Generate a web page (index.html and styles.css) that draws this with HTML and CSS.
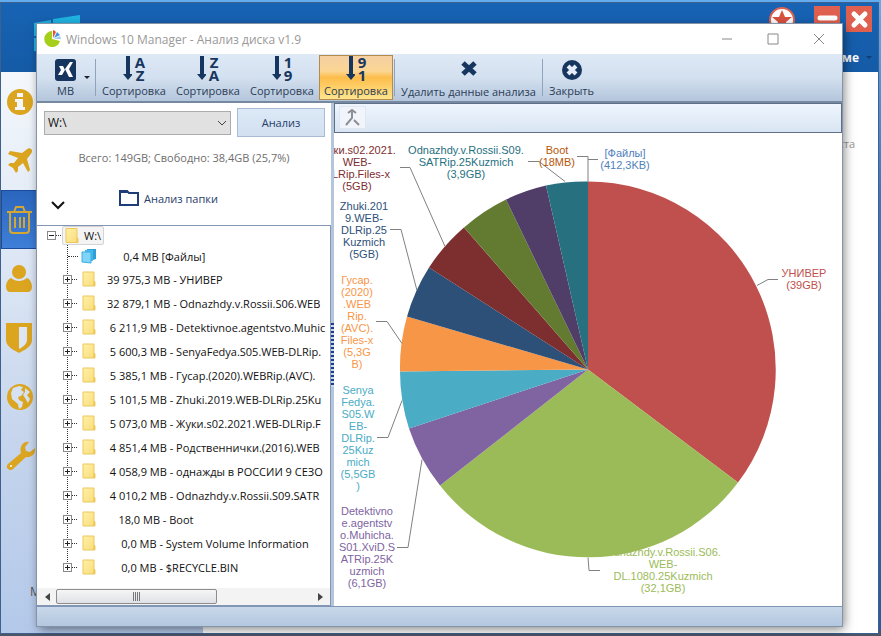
FILE: index.html
```
<!DOCTYPE html>
<html lang="ru">
<head>
    <meta charset="utf-8">
    <title>Windows 10 Manager - Анализ диска v1.9</title>
    <link rel="stylesheet" href="styles.css">
</head>
<body>
    <!-- icons used more than once -->
    <svg width="0" height="0" class="defs">
        <defs>
            <linearGradient id="paper" x1="0" x2="1" y1="0" y2="1">
                <stop offset="0" stop-color="#fff0a8"/>
                <stop offset="1" stop-color="#f8dc78"/>
            </linearGradient>
            <symbol id="folder" viewBox="0 0 14 16">
                <path d="M1 1h11v9l1 1v4H1z" fill="url(#paper)" stroke="#ecc95c"/>
                <path d="M12 10v5" fill="none" stroke="#e6bf4c"/>
            </symbol>
            <symbol id="sort-arrow" viewBox="0 0 9 24">
                <path d="M3 0h4v18h3l-5 6-5-6h3z" fill="#17365f"/>
            </symbol>
        </defs>
    </svg>

    <div class="main-window">
        <header class="main-header">
            <svg class="win-logo" width="46" height="44" viewBox="0 0 46 44"><path d="M0 8l17-3v16H0zM19 4l27-4v21H19zM0 23h17v16l-17-3zM19 23h27v21l-27-4z" fill="#1fb4e2"/></svg>
            <div class="main-buttons">
                <button class="star" aria-label="Избранное"><svg width="28" height="28" viewBox="0 0 28 28"><circle cx="14" cy="14" r="12" fill="#fff" stroke="#e0604f" stroke-width="2"/><path d="M14 4l3 7h7l-6 5 3 8-7-5-7 5 3-8-6-5h7z" fill="#d9513f"/></svg></button>
                <button class="red" aria-label="Свернуть"><svg width="26" height="26" viewBox="0 0 26 26"><path d="M6 12h15" stroke="#fff" stroke-width="5" stroke-linecap="round"/></svg></button>
                <button class="red" aria-label="Выход"><svg width="26" height="26" viewBox="0 0 26 26"><path d="M8 8l11 11M19 8L8 19" stroke="#fff" stroke-width="5" stroke-linecap="round"/></svg></button>
            </div>
            <a href="#" class="about">О программе <span></span></a>
        </header>
        <div class="main-body">
            <nav class="side">
                <a href="#" aria-label="Информация"><svg width="28" height="28" viewBox="0 0 28 28"><circle cx="14" cy="14" r="13" fill="#dba520"/><path d="M11 5h6v4h-6zM9 11h8v8h2v3H9v-3h2v-5H9z" fill="#f2f6fb"/></svg></a>
                <a href="#" aria-label="Оптимизация"><svg width="28" height="28" viewBox="0 0 28 28"><path d="M25 2c2 1 1 4-1 6l-3 4 3 11-2 2-5-9-5 4v4l-2 2-3-5-5-3 2-2h4l4-5-10-4 2-3 12 2 4-3c2-2 4-2 5-1z" fill="#dba520"/></svg></a>
                <a href="#" class="current" aria-label="Очистка"><svg width="28" height="30" viewBox="0 0 28 30" fill="none" stroke="#d6a632" stroke-width="2"><path d="M1 7h25M4 7v18c0 2 1 3 3 3h13c2 0 3-1 3-3V7M8 7l2-5h7l2 5"/><path d="M9 12v11M14 12v11M18 12v11"/></svg></a>
                <a href="#" aria-label="Пользователь"><svg width="28" height="30" viewBox="0 0 28 30" fill="#dba520"><circle cx="13" cy="8" r="7"/><path d="M5 14c5 4 11 4 16 0 3 1 5 5 5 9 0 3-2 5-4 5H4c-2 0-4-2-4-5 0-4 2-8 5-9z"/></svg></a>
                <a href="#" aria-label="Безопасность"><svg width="28" height="30" viewBox="0 0 28 30"><path d="M0 0h26v17c0 6-7 10-13 13C7 27 0 23 0 17z" fill="#dba520"/><path d="M13 4h8v13c0 4-4 7-8 9z" fill="#dce6f4"/></svg></a>
                <a href="#" aria-label="Сеть"><svg width="28" height="28" viewBox="0 0 28 28"><circle cx="14" cy="14" r="13" fill="#dba520"/><path d="M7 5l6-2 4 1-2 3 3 2-3 4-3 1 1 3 4 2-1 5-3 2-1-5-6-5-1-6zM19 5l5 4-3 3 3 4-2 4-3-5-2-3 2-3z" fill="#d6e2f2"/></svg></a>
                <a href="#" aria-label="Разное"><svg width="30" height="30" viewBox="0 0 30 30"><path d="M23 1l-4 5 1 4 4 1 5-4c1 5-3 10-9 9L8 27c-2 3-5 2-6 1-2-2-1-4 0-5l13-11C13 5 18 0 23 1z" fill="#dba520"/><circle cx="5" cy="25" r="1" fill="#fff"/></svg></a>
                <span class="side-note">М</span>
            </nav>
            <main class="page"><p>места</p></main>
        </div>
    </div>

    <section class="window">
        <div class="titlebar">
            <svg width="18" height="18" viewBox="0 0 18 18"><path d="M8 1v8l8 2A8 8 0 1 1 8 1z" fill="#a6cf1c"/><path d="M9 8l3-6A8 8 0 0 0 9 0z" fill="#ee4d35"/><path d="M10 8l6-3-3-3z" fill="#3b96dc"/><path d="M10 9h7l-1-3z" fill="#9ccdf0"/></svg>
            <h1>Windows 10 Manager - Анализ диска v1.9</h1>
            <button aria-label="Свернуть"><svg width="12" height="12"><path d="M1 6h10" stroke="#888"/></svg></button>
            <button aria-label="Развернуть"><svg width="12" height="12"><path d="M1 1h10v10H1z" fill="none" stroke="#888"/></svg></button>
            <button aria-label="Закрыть окно"><svg width="12" height="12"><path d="M1 1l10 10M11 1L1 11" stroke="#888"/></svg></button>
        </div>

        <div class="toolbar">
            <button class="tool unit">
                <svg width="21" height="22" viewBox="0 0 21 22"><rect width="21" height="22" rx="3" fill="#17365f"/><path d="M4 7h4l2 4-3 5H3l3-5zM15 3h3l-4 7 4 8h-4l-4-8z" fill="#fff"/></svg>
                <span>MB</span>
            </button>
            <span class="drop"></span>
            <i class="sep"></i>
            <button class="tool sort"><span class="pic"><svg width="9" height="24"><use href="#sort-arrow"/></svg><b>A<br>Z</b></span><span>Сортировка</span></button>
            <button class="tool sort"><span class="pic"><svg width="9" height="24"><use href="#sort-arrow"/></svg><b>Z<br>A</b></span><span>Сортировка</span></button>
            <button class="tool sort"><span class="pic"><svg width="9" height="24"><use href="#sort-arrow"/></svg><b>1<br>9</b></span><span>Сортировка</span></button>
            <button class="tool sort active"><span class="pic"><svg width="9" height="24"><use href="#sort-arrow"/></svg><b>9<br>1</b></span><span>Сортировка</span></button>
            <i class="sep"></i>
            <button class="tool delete">
                <svg width="18" height="22" viewBox="0 0 18 22"><path d="M3 5l12 11M15 5L3 16" stroke="#17365f" stroke-width="5"/></svg>
                <span>Удалить данные анализа</span>
            </button>
            <i class="sep"></i>
            <button class="tool close">
                <svg width="22" height="22" viewBox="0 0 22 22"><circle cx="11" cy="11" r="10" fill="#17365f"/><path d="M7 7l8 8M15 7l-8 8" stroke="#e4edf8" stroke-width="4"/></svg>
                <span>Закрыть</span>
            </button>
        </div>

        <div class="content">
            <div class="left">
                <div class="pick">
                    <div class="drive">
                        <select aria-label="Диск"><option>W:\</option></select>
                        <svg width="10" height="6" viewBox="0 0 10 6"><path d="M1 1l4 4 4-4" fill="none" stroke="#444"/></svg>
                    </div>
                    <button class="analyze">Анализ</button>
                </div>
                <p class="total">Всего: 149GB; Свободно: 38,4GB (25,7%)</p>
                <div class="folder-row">
                    <button class="expand" aria-label="Развернуть дерево"><svg width="15" height="9" viewBox="0 0 15 9"><path d="M1 1l6 6 6-6" fill="none" stroke="#111" stroke-width="2"/></svg></button>
                    <a href="#"><svg width="21" height="18" viewBox="0 0 21 18"><path d="M1 2h7l2 2h9v12H1z" fill="none" stroke="#1f3d78" stroke-width="2"/><path d="M1 1h7l2 3H1z" fill="#1f3d78"/></svg>Анализ папки</a>
                </div>
                <div class="tree-wrap">
                    <div class="tree">
                        <div class="root"><i class="box minus"></i><i class="dots"></i><span class="picked"><svg width="14" height="17"><use href="#folder"/></svg>W:\</span></div>
                        <ul>
                            <li class="files"><i class="dots"></i><svg width="16" height="16" viewBox="0 0 16 16"><path d="M6 1h9v10l-3 1V3H6z" fill="#2f9fd6"/><path d="M4 2h8v11H4z" fill="#45b8ee"/><path d="M1 4h9v11l-9-1z" fill="#7fd4f8" stroke="#3aaee4"/></svg><span>     0,4 MB [Файлы]</span></li>
                            <li><i class="box"></i><i class="dots"></i><svg width="14" height="16"><use href="#folder"/></svg><span>39 975,3 MB - УНИВЕР</span></li>
                            <li><i class="box"></i><i class="dots"></i><svg width="14" height="16"><use href="#folder"/></svg><span>32 879,1 MB - Odnazhdy.v.Rossii.S06.WEB</span></li>
                            <li><i class="box"></i><i class="dots"></i><svg width="14" height="16"><use href="#folder"/></svg><span> 6 211,9 MB - Detektivnoe.agentstvo.Muhic</span></li>
                            <li><i class="box"></i><i class="dots"></i><svg width="14" height="16"><use href="#folder"/></svg><span> 5 600,3 MB - SenyaFedya.S05.WEB-DLRip.</span></li>
                            <li><i class="box"></i><i class="dots"></i><svg width="14" height="16"><use href="#folder"/></svg><span> 5 385,1 MB - Гусар.(2020).WEBRip.(AVC).</span></li>
                            <li><i class="box"></i><i class="dots"></i><svg width="14" height="16"><use href="#folder"/></svg><span> 5 101,5 MB - Zhuki.2019.WEB-DLRip.25Ku</span></li>
                            <li><i class="box"></i><i class="dots"></i><svg width="14" height="16"><use href="#folder"/></svg><span> 5 073,0 MB - Жуки.s02.2021.WEB-DLRip.F</span></li>
                            <li><i class="box"></i><i class="dots"></i><svg width="14" height="16"><use href="#folder"/></svg><span> 4 851,4 MB - Родственнички.(2016).WEB</span></li>
                            <li><i class="box"></i><i class="dots"></i><svg width="14" height="16"><use href="#folder"/></svg><span> 4 058,9 MB - однажды в РОССИИ 9 СЕЗО</span></li>
                            <li><i class="box"></i><i class="dots"></i><svg width="14" height="16"><use href="#folder"/></svg><span> 4 010,2 MB - Odnazhdy.v.Rossii.S09.SATR</span></li>
                            <li><i class="box"></i><i class="dots"></i><svg width="14" height="16"><use href="#folder"/></svg><span>    18,0 MB - Boot</span></li>
                            <li><i class="box"></i><i class="dots"></i><svg width="14" height="16"><use href="#folder"/></svg><span>     0,0 MB - System Volume Information</span></li>
                            <li><i class="box"></i><i class="dots"></i><svg width="14" height="16"><use href="#folder"/></svg><span>     0,0 MB - $RECYCLE.BIN</span></li>
                        </ul>
                    </div>
                    <div class="scrollbar">
                        <i class="arrow-left"></i>
                        <div class="track"><div class="thumb"><i></i></div></div>
                        <i class="arrow-right"></i>
                    </div>
                </div>
            </div>

            <div class="splitter"><i></i></div>

            <div class="right">
                <div class="chart-bar">
                    <button aria-label="Вверх"><svg width="17" height="19" viewBox="0 0 17 19" fill="none" stroke="#8b8e94" stroke-width="2"><path d="M8 2v8l-6 7M4 5l4-3 4 3M10 12l5 5"/></svg></button>
                </div>
                <svg class="chart" viewBox="1 1 508 472">
                    <g class="slices">
                        <path d="M255 237V49A188 188 0 0 1 405 350z" fill="#c0504d"/>
                        <path d="M255 237L405 350A188 188 0 0 1 107 353z" fill="#9bbb58"/>
                        <path d="M255 237L107 353A188 188 0 0 1 76 296z" fill="#8064a1"/>
                        <path d="M255 237L76 296A188 188 0 0 1 67 239z" fill="#4aacc5"/>
                        <path d="M255 237L67 239A188 188 0 0 1 74 184z" fill="#f79647"/>
                        <path d="M255 237L74 184A188 188 0 0 1 96 135z" fill="#2d5078"/>
                        <path d="M255 237L96 135A188 188 0 0 1 131 95z" fill="#7d2e2f"/>
                        <path d="M255 237L131 95A188 188 0 0 1 173 67z" fill="#637b30"/>
                        <path d="M255 237L173 67A188 188 0 0 1 213 53z" fill="#503e68"/>
                        <path d="M255 237L213 53A188 188 0 0 1 255 49z" fill="#26707f"/>
                    </g>
                    <g class="leaders">
                        <path d="M424 153l11-6h10"/>
                        <path d="M255 425l1 13h11"/>
                        <path d="M64 415h11l14-88"/>
                        <path d="M44 305h11l14-37"/>
                        <path d="M43 189h11l15 22"/>
                        <path d="M57 97h11l16 61"/>
                        <path d="M67 35h10l35 79"/>
                        <path d="M195 29h11l26 20"/>
                        <path d="M244 24h11v25M255 27h10"/>
                    </g>
                    <text y="144" fill="#c0504d"><tspan x="471">УНИВЕР</tspan><tspan x="471" dy="12">(39GB)</tspan></text>
                    <text y="423" fill="#9bbb58"><tspan x="330">Odnazhdy.v.Rossii.S06.</tspan><tspan x="330" dy="12">WEB-</tspan><tspan x="330" dy="12">DL.1080.25Kuzmich</tspan><tspan x="330" dy="12">(32,1GB)</tspan></text>
                    <text y="382" fill="#8064a1"><tspan x="34">Detektivno</tspan><tspan x="34" dy="12">e.agentstv</tspan><tspan x="34" dy="12">o.Muhicha.</tspan><tspan x="34" dy="12">S01.XviD.S</tspan><tspan x="34" dy="12">ATRip.25K</tspan><tspan x="34" dy="12">uzmich</tspan><tspan x="34" dy="12">(6,1GB)</tspan></text>
                    <text y="261" fill="#4aacc5"><tspan x="25">Senya</tspan><tspan x="25" dy="12">Fedya.</tspan><tspan x="25" dy="12">S05.W</tspan><tspan x="25" dy="12">EB-</tspan><tspan x="25" dy="12">DLRip.</tspan><tspan x="25" dy="12">25Kuz</tspan><tspan x="25" dy="12">mich</tspan><tspan x="25" dy="12">(5,5GB</tspan><tspan x="25" dy="12">)</tspan></text>
                    <text y="151" fill="#f79647"><tspan x="24">Гусар.</tspan><tspan x="24" dy="12">(2020)</tspan><tspan x="24" dy="12">.WEB</tspan><tspan x="24" dy="12">Rip.</tspan><tspan x="24" dy="12">(AVC).</tspan><tspan x="24" dy="12">Files-x</tspan><tspan x="24" dy="12">(5,3G</tspan><tspan x="24" dy="12">B)</tspan></text>
                    <text y="77" fill="#2d5078"><tspan x="31">Zhuki.201</tspan><tspan x="31" dy="12">9.WEB-</tspan><tspan x="31" dy="12">DLRip.25</tspan><tspan x="31" dy="12">Kuzmich</tspan><tspan x="31" dy="12">(5GB)</tspan></text>
                    <text y="21" fill="#7d2e2f"><tspan x="24">Жуки.s02.2021.</tspan><tspan x="24" dy="12">WEB-</tspan><tspan x="24" dy="12">DLRip.Files-x</tspan><tspan x="24" dy="12">(5GB)</tspan></text>
                    <text y="21" fill="#26707f"><tspan x="133">Odnazhdy.v.Rossii.S09.</tspan><tspan x="133" dy="12">SATRip.25Kuzmich</tspan><tspan x="133" dy="12">(3,9GB)</tspan></text>
                    <text y="21" fill="#b65708"><tspan x="224">Boot</tspan><tspan x="224" dy="12">(18MB)</tspan></text>
                    <text y="24" fill="#4f81bd"><tspan x="292">[Файлы]</tspan><tspan x="292" dy="12">(412,3KB)</tspan></text>
                </svg>
            </div>
        </div>

        <div class="statusbar"></div>
    </section>
</body>
</html>
```
FILE: styles.css
```
* { box-sizing: border-box; }
body {
    margin: 0;
    height: 100vh;
    overflow: hidden;
    position: relative;
    display: flex;
    padding: 2px 2px 2px 0;
    background: linear-gradient(#62acf0 0, #3b78c4 30%, #2a5a9c 99%, #4a5568 99%);
    font-family: "Open Sans", "Noto Sans", sans-serif;
    font-size: 12px;
    color: #111;
}
button {
    border: none;
    background: none;
    padding: 0;
    font: inherit;
    color: inherit;
}
a { color: inherit; text-decoration: none; }
svg { display: block; flex: none; }
.defs { position: absolute; }

/* program window at the back */
.main-window {
    flex: 1;
    display: flex;
    flex-direction: column;
    border: 1px solid #3f5f8c;
}
.main-header {
    flex: none;
    position: relative;
    height: 69px;
    display: flex;
    flex-direction: column;
    align-items: flex-end;
    justify-content: space-between;
    padding: 3px 6px 6px;
    background: linear-gradient(#1763b4, #155ba6);
}
.win-logo {
    position: absolute;
    left: 33px;
    top: 12px;
}
.main-buttons { display: flex; gap: 6px; }
.main-buttons .star { margin-right: 12px; }
.main-buttons .red { width: 26px; height: 26px; background: #e0604f; }
.about {
    display: flex;
    align-items: center;
    gap: 7px;
    color: #fff;
    font-weight: bold;
}
.about span {
    border: 3px solid transparent;
    border-top-color: #0e3e78;
    border-bottom: none;
}
.main-body { flex: 1; display: flex; }
.side {
    width: 202px;
    display: flex;
    flex-direction: column;
    background: linear-gradient(#f4f8fc, #c3d3ec 70%, #b4c9ea);
}
.side a {
    height: 59px;
    display: flex;
    align-items: center;
    padding-left: 5px;
}
.side a.current {
    background: linear-gradient(#2b66be, #3f7fd8);
    border: 1px solid #1c4c9c;
    padding-left: 4px;
}
.side-note { margin: 98px 0 0 29px; color: #555; }
.page {
    flex: 1;
    background: #fff;
    color: #999;
    font-size: 11px;
    text-align: right;
    padding: 64px 23px 0 0;
}
.page p { margin: 0; }

/* disk analysis window */
.window {
    position: absolute;
    top: 24px;
    right: 39px;
    bottom: 10px;
    left: 37px;
    display: flex;
    flex-direction: column;
    background: #fff;
    box-shadow: 0 0 0 1px #8393a8, 2px 3px 10px rgba(0, 0, 0, 0.5);
}
.titlebar {
    height: 30px;
    flex: none;
    display: flex;
    align-items: center;
    padding-left: 7px;
    color: #999;
}
.titlebar h1 {
    flex: 1;
    margin: 0 0 0 4px;
    font-size: 12px;
    font-weight: normal;
}
.titlebar button {
    width: 46px;
    height: 30px;
    display: flex;
    align-items: center;
    justify-content: center;
}

.toolbar {
    height: 49px;
    flex: none;
    display: flex;
    padding: 1px 0;
    background: linear-gradient(#dfe9f6, #d3e0ef 50%, #b4c6dc);
    border-bottom: 2px solid #7689a2;
    font-size: 11px;
    color: #2b3c55;
}
.tool {
    display: flex;
    flex-direction: column;
    align-items: center;
    justify-content: space-between;
    line-height: 16px;
    white-space: nowrap;
}
.tool.unit { width: 42px; padding: 4px 0 1px 15px; }
.tool.sort { width: 74px; border: 1px solid transparent; }
.tool.delete { width: 145px; padding-top: 3px; }
.tool.close { width: 55px; padding: 4px 0 1px; }
.tool.active {
    border-color: #b58b4b;
    background: linear-gradient(#f5cfa2, #fbd694 35%, #fdbd4a 50%, #fee58e);
}
.pic { display: flex; gap: 3px; }
.pic b {
    font-size: 15px;
    line-height: 13px;
    color: #17365f;
}
.drop {
    align-self: center;
    margin: 0 4px 0 5px;
    border: 3px solid transparent;
    border-top-color: #223;
    border-bottom: none;
}
.sep { width: 1px; margin: 4px 1px; background: #8fa3bd; }

.content { flex: 1; min-height: 0; display: flex; }
.left {
    width: 294px;
    flex: none;
    display: flex;
    flex-direction: column;
}
.pick {
    display: flex;
    align-items: center;
    gap: 6px;
    padding: 5px 6px 0 7px;
}
.drive {
    flex: 1;
    display: grid;
    align-items: center;
}
.drive select, .drive svg { grid-area: 1 / 1; }
.drive svg { justify-self: end; margin-right: 4px; pointer-events: none; }
.drive select {
    appearance: none;
    height: 24px;
    padding: 0 3px;
    border: 1px solid #acacac;
    border-radius: 0;
    background: #e1e1e1;
    font: inherit;
    color: #111;
}
.analyze {
    width: 88px;
    height: 29px;
    border: 1px solid #a9bcd6;
    background: linear-gradient(#dce9f7, #d2e0f0);
    font-size: 11px;
    color: #27406b;
}
.total {
    margin: 12px 0 0;
    line-height: 18px;
    font-size: 11px;
    text-align: center;
    color: #6e6e6e;
}
.folder-row {
    display: flex;
    align-items: flex-end;
    gap: 53px;
    padding: 22px 0 15px 14px;
    font-size: 11px;
    color: #27406b;
}
.folder-row a { display: flex; gap: 4px; margin-bottom: 3px; align-items: center; }
.tree-wrap {
    flex: 1;
    min-height: 0;
    display: flex;
    flex-direction: column;
    border: 1px solid #8397b5;
    border-left: none;
    font-size: 11px;
}
.tree {
    flex: 1;
    min-height: 0;
    overflow: hidden;
    padding-left: 10px;
}
.root {
    display: flex;
    align-items: center;
    height: 19px;
}
.picked {
    display: flex;
    align-items: center;
    gap: 5px;
    height: 19px;
    padding: 0 2px;
    margin-left: 1px;
    border: 1px solid #d4d4d4;
    border-radius: 2px;
    background: #f4f4f4;
}
.tree ul {
    margin: 0 0 0 20px;
    padding: 0;
    list-style: none;
    border-left: 1px dotted #333;
    height: 325px;
}
.tree li {
    display: flex;
    align-items: center;
    height: 24px;
    margin-left: -5px;
    white-space: pre;
}
.tree li.files { margin-left: 0; height: 22px; }
.tree li.files .dots { width: 10px; }
.tree li.files svg { margin: 0 12px 0 3px; }
.tree li svg { margin: 0 11px 0 5px; }
.box {
    flex: none;
    width: 9px;
    height: 9px;
    border: 1px solid #8a8a8a;
    background:
        linear-gradient(#222, #222) center / 5px 1px no-repeat,
        linear-gradient(#222, #222) center / 1px 5px no-repeat,
        #fff;
}
.box.minus { background: linear-gradient(#222, #222) center / 5px 1px no-repeat, #fff; }
.dots { flex: none; width: 5px; border-top: 1px dotted #333; }

.scrollbar {
    height: 17px;
    flex: none;
    display: flex;
    align-items: center;
    padding: 0 7px 0 8px;
    background: #f3f3f3;
}
.arrow-left, .arrow-right { border: 4px solid transparent; }
.arrow-left { border-left: none; border-right: 5px solid #444; }
.arrow-right { border-right: none; border-left: 5px solid #444; }
.track { flex: 1; padding: 0 6px; }
.thumb {
    width: 63%;
    height: 15px;
    display: flex;
    align-items: center;
    justify-content: center;
    border: 1px solid #8d8d8d;
    border-radius: 2px;
    background: linear-gradient(#f6f6f6, #dfe1e6);
}
.thumb i {
    width: 7px;
    height: 9px;
    background: repeating-linear-gradient(90deg, #777 0 1px, transparent 1px 2px);
}

.splitter {
    width: 3px;
    display: flex;
    align-items: center;
    background: #b4c6dc;
}
.splitter i {
    width: 3px;
    height: 64px;
    background: repeating-linear-gradient(#1f3d8c 0 2px, #c8d6ea 2px 4px);
}
.right {
    flex: 1;
    min-width: 0;
    display: flex;
    flex-direction: column;
}
.chart-bar {
    height: 30px;
    flex: none;
    padding: 2px 4px;
    border: 1px solid #5f6f86;
    background: linear-gradient(#eef5fd, #d9e5f3);
}
.chart-bar button {
    width: 27px;
    height: 23px;
    display: flex;
    align-items: center;
    justify-content: center;
    border: 1px solid #dfe7f1;
    background: #f1f5fb;
}
.chart { flex: 1; min-height: 0; width: 100%; }
.chart text {
    font-family: "Liberation Sans", Arial, sans-serif;
    font-size: 11px;
    text-anchor: middle;
}
.leaders path { fill: none; stroke: #808080; }

.statusbar {
    height: 20px;
    flex: none;
    border-top: 1px solid #7f95b5;
    background: linear-gradient(#c9d8ea, #b3c7df);
}
```
